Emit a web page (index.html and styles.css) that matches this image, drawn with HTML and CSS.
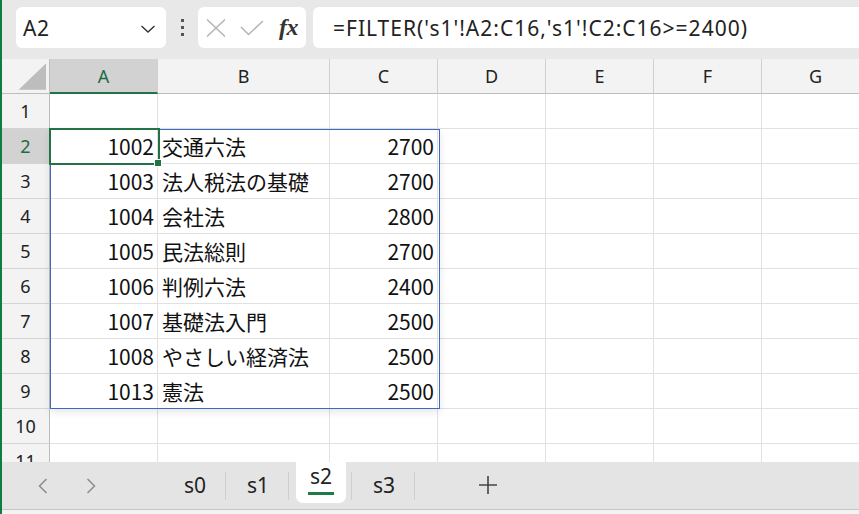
FILE: index.html
```html
<!DOCTYPE html>
<html lang="ja">
<head>
<meta charset="utf-8">
<title>Excel</title>
<link rel="stylesheet" href="styles.css">
</head>
<body>
<div class="app">
  <div class="topbar">
    <div class="namebox">
      <span class="ref">A2</span>
      <svg class="chev" width="16" height="10" viewBox="0 0 16 10"><path d="M1.5 2 L8 8 L14.5 2" fill="none" stroke="#333" stroke-width="1.4"/></svg>
    </div>
    <div class="dots"><i></i><i></i><i></i></div>
    <div class="iconbox">
      <svg width="20" height="18" viewBox="0 0 20 18"><path d="M1 0.5 L19 17.5 M19 0.5 L1 17.5" stroke="#b5b5b5" stroke-width="1.5" fill="none"/></svg>
      <svg width="24" height="16" viewBox="0 0 24 16"><path d="M1 7 L8.5 14.5 L23 1" stroke="#b5b5b5" stroke-width="1.5" fill="none"/></svg>
      <span class="fx">fx</span>
    </div>
    <div class="formula">=FILTER('s1'!A2:C16,'s1'!C2:C16&gt;=2400)</div>
  </div>

  <div class="sheet">
    <div class="grid">
      <div class="corner"><svg width="48" height="35" viewBox="0 0 48 35"><path d="M17 31 L45 4 L45 31 Z" fill="#bdbdbd"/></svg></div>
      <div class="ch sel">A</div><div class="ch">B</div><div class="ch">C</div><div class="ch">D</div><div class="ch">E</div><div class="ch">F</div><div class="ch">G</div>

      <div class="rh">1</div><div class="c"></div><div class="c"></div><div class="c"></div><div class="c"></div><div class="c"></div><div class="c"></div><div class="c"></div>
      <div class="rh sel">2</div><div class="c n">1002</div><div class="c t">交通六法</div><div class="c n">2700</div><div class="c"></div><div class="c"></div><div class="c"></div><div class="c"></div>
      <div class="rh">3</div><div class="c n">1003</div><div class="c t">法人税法の基礎</div><div class="c n">2700</div><div class="c"></div><div class="c"></div><div class="c"></div><div class="c"></div>
      <div class="rh">4</div><div class="c n">1004</div><div class="c t">会社法</div><div class="c n">2800</div><div class="c"></div><div class="c"></div><div class="c"></div><div class="c"></div>
      <div class="rh">5</div><div class="c n">1005</div><div class="c t">民法総則</div><div class="c n">2700</div><div class="c"></div><div class="c"></div><div class="c"></div><div class="c"></div>
      <div class="rh">6</div><div class="c n">1006</div><div class="c t">判例六法</div><div class="c n">2400</div><div class="c"></div><div class="c"></div><div class="c"></div><div class="c"></div>
      <div class="rh">7</div><div class="c n">1007</div><div class="c t">基礎法入門</div><div class="c n">2500</div><div class="c"></div><div class="c"></div><div class="c"></div><div class="c"></div>
      <div class="rh">8</div><div class="c n">1008</div><div class="c t">やさしい経済法</div><div class="c n">2500</div><div class="c"></div><div class="c"></div><div class="c"></div><div class="c"></div>
      <div class="rh">9</div><div class="c n">1013</div><div class="c t">憲法</div><div class="c n">2500</div><div class="c"></div><div class="c"></div><div class="c"></div><div class="c"></div>
      <div class="rh">10</div><div class="c"></div><div class="c"></div><div class="c"></div><div class="c"></div><div class="c"></div><div class="c"></div><div class="c"></div>
      <div class="rh">11</div><div class="c"></div><div class="c"></div><div class="c"></div><div class="c"></div><div class="c"></div><div class="c"></div><div class="c"></div>
    </div>
    <div class="spill"></div>
    <div class="cursor"><span class="handle"></span></div>
  </div>

  <div class="tabbar">
    <div class="nav">
      <svg width="10" height="16" viewBox="0 0 10 16"><path d="M8.5 1 L1.5 8 L8.5 15" fill="none" stroke="#8c8c8c" stroke-width="1.5"/></svg>
      <svg width="10" height="16" viewBox="0 0 10 16"><path d="M1.5 1 L8.5 8 L1.5 15" fill="none" stroke="#8c8c8c" stroke-width="1.5"/></svg>
    </div>
    <div class="tab"><div class="tab-in">s0</div></div>
    <div class="tab"><div class="tab-in">s1</div></div>
    <div class="tab active"><div class="tab-in">s2<span class="uline"></span></div></div>
    <div class="tab"><div class="tab-in">s3</div></div>
    <div class="add">
      <svg width="18" height="18" viewBox="0 0 18 18"><path d="M9 0 V18 M0 9 H18" stroke="#444" stroke-width="1.6"/></svg>
    </div>
  </div>
  <div class="status"></div>
</div>
</body>
</html>
```

FILE: styles.css
```css
html, body {
  margin: 0;
  padding: 0;
}
body {
  width: 859px;
  height: 514px;
  overflow: hidden;
  background: #ffffff;
  font-family: "Noto Sans CJK JP", "Noto Sans", sans-serif;
}
.app {
  width: 857px;
  height: 514px;
  border-left: 2px solid #107c41;
  display: flex;
  flex-direction: column;
  overflow: hidden;
}

/* top bar */
.topbar {
  height: 59px;
  flex: none;
  background: #e8e8e8;
  display: flex;
  align-items: flex-start;
  padding-top: 7px;
  padding-left: 14px;
  box-sizing: border-box;
}
.namebox {
  width: 150px;
  height: 41px;
  background: #fff;
  border-radius: 6px;
  display: flex;
  align-items: center;
  justify-content: space-between;
  padding: 0 10px 0 7px;
  box-sizing: border-box;
}
.ref {
  font-family: "Noto Sans", sans-serif;
  font-size: 21px;
  color: #222;
  letter-spacing: 0.5px;
}
.chev { margin-top: 2px; }
.dots {
  width: 32px;
  height: 41px;
  display: flex;
  flex-direction: column;
  align-items: center;
  justify-content: center;
  gap: 4px;
}
.dots i {
  display: block;
  width: 3px;
  height: 3px;
  background: #555;
}
.iconbox {
  width: 108px;
  height: 41px;
  background: #fff;
  border-radius: 6px;
  display: flex;
  align-items: center;
  padding-left: 8px;
  gap: 14px;
  box-sizing: border-box;
}
.fx {
  font-family: "Liberation Serif", "DejaVu Serif", serif;
  font-style: italic;
  font-weight: bold;
  font-size: 24px;
  color: #333;
  margin-left: 1px;
  letter-spacing: -0.5px;
}
.formula {
  margin-left: 7px;
  flex: 1;
  height: 41px;
  background: #fff;
  border-radius: 6px 0 0 6px;
  display: flex;
  align-items: center;
  padding-left: 20px;
  font-family: "Noto Sans", sans-serif;
  font-size: 21px;
  letter-spacing: 1px;
  color: #222;
  white-space: nowrap;
  overflow: hidden;
}

/* sheet */
.sheet {
  position: relative;
  flex: 1 1 auto;
  min-height: 0;
  overflow: hidden;
}
.grid {
  display: grid;
  grid-template-columns: 48px 108px 172px 108px 108px 108px 108px 108px;
  grid-auto-rows: 35px;
  width: 868px;
}
.grid > div {
  box-sizing: border-box;
  display: flex;
  align-items: center;
}
.corner {
  background: #f3f3f3;
  border-right: 1px solid #bdbdbd;
  border-bottom: 1px solid #bdbdbd;
}
.ch {
  background: #f3f3f3;
  border-right: 1px solid #d0d0d0;
  border-bottom: 1px solid #bdbdbd;
  justify-content: center;
  font-family: "Noto Sans", sans-serif;
  font-size: 18px;
  color: #222;
}
.ch.sel {
  background: #d2d2d2;
  border-bottom: 2px solid #217346;
  color: #1e6b44;
}
.rh {
  background: #f3f3f3;
  border-right: 1px solid #bdbdbd;
  border-bottom: 1px solid #d4d4d4;
  justify-content: center;
  font-family: "Noto Sans", sans-serif;
  font-size: 18px;
  color: #222;
}
.rh.sel {
  background: #d2d2d2;
  color: #1e6b44;
}
.c {
  border-right: 1px solid #e1e1e1;
  border-bottom: 1px solid #e1e1e1;
  font-size: 21px;
  color: #111;
  white-space: nowrap;
  overflow: hidden;
}
.c.n {
  justify-content: flex-end;
  padding-right: 3px;
}
.c.t {
  padding-left: 4px;
}

.spill {
  position: absolute;
  left: 48px;
  top: 70px;
  width: 390px;
  height: 280px;
  border: 1px solid #3c6bc4;
  box-sizing: border-box;
  box-shadow: 0 3px 8px rgba(0, 0, 0, 0.10);
  pointer-events: none;
}
.cursor {
  position: absolute;
  left: 47px;
  top: 69px;
  width: 111px;
  height: 37px;
  border: 2px solid #217346;
  box-sizing: border-box;
}
.handle {
  position: absolute;
  right: -4px;
  bottom: -4px;
  width: 6px;
  height: 6px;
  background: #217346;
  border: 1px solid #fff;
}

/* tabs */
.tabbar {
  height: 48px;
  flex: none;
  background: #e4e4e4;
  border-bottom: 1px solid #c6c6c6;
  box-sizing: border-box;
  display: flex;
  align-items: stretch;
}
.nav {
  width: 161px;
  display: flex;
  align-items: center;
  padding-left: 36px;
  gap: 38px;
  box-sizing: border-box;
}
.tab {
  width: 63px;
  position: relative;
  display: flex;
  justify-content: center;
  padding-left: 1px;
  box-sizing: border-box;
}
.tab::after {
  content: "";
  position: absolute;
  right: 0;
  top: 10px;
  height: 28px;
  width: 1px;
  background: #cfcfcf;
}
.tab-in {
  width: 50px;
  height: 41px;
  display: flex;
  flex-direction: column;
  align-items: center;
  justify-content: center;
  padding-top: 5px;
  box-sizing: border-box;
  font-family: "Noto Sans", sans-serif;
  font-size: 21px;
  color: #222;
}
.tab.active .tab-in {
  background: #fff;
  border-radius: 0 0 7px 7px;
  padding-top: 0;
  justify-content: flex-start;
}
.uline {
  display: block;
  width: 26px;
  height: 3px;
  background: #1e7b45;
  margin-top: 2px;
}
.add {
  width: 145px;
  display: flex;
  align-items: center;
  justify-content: center;
  padding-bottom: 2px;
}
.status {
  flex: none;
  height: 4px;
  background: #f3f3f3;
}
```
